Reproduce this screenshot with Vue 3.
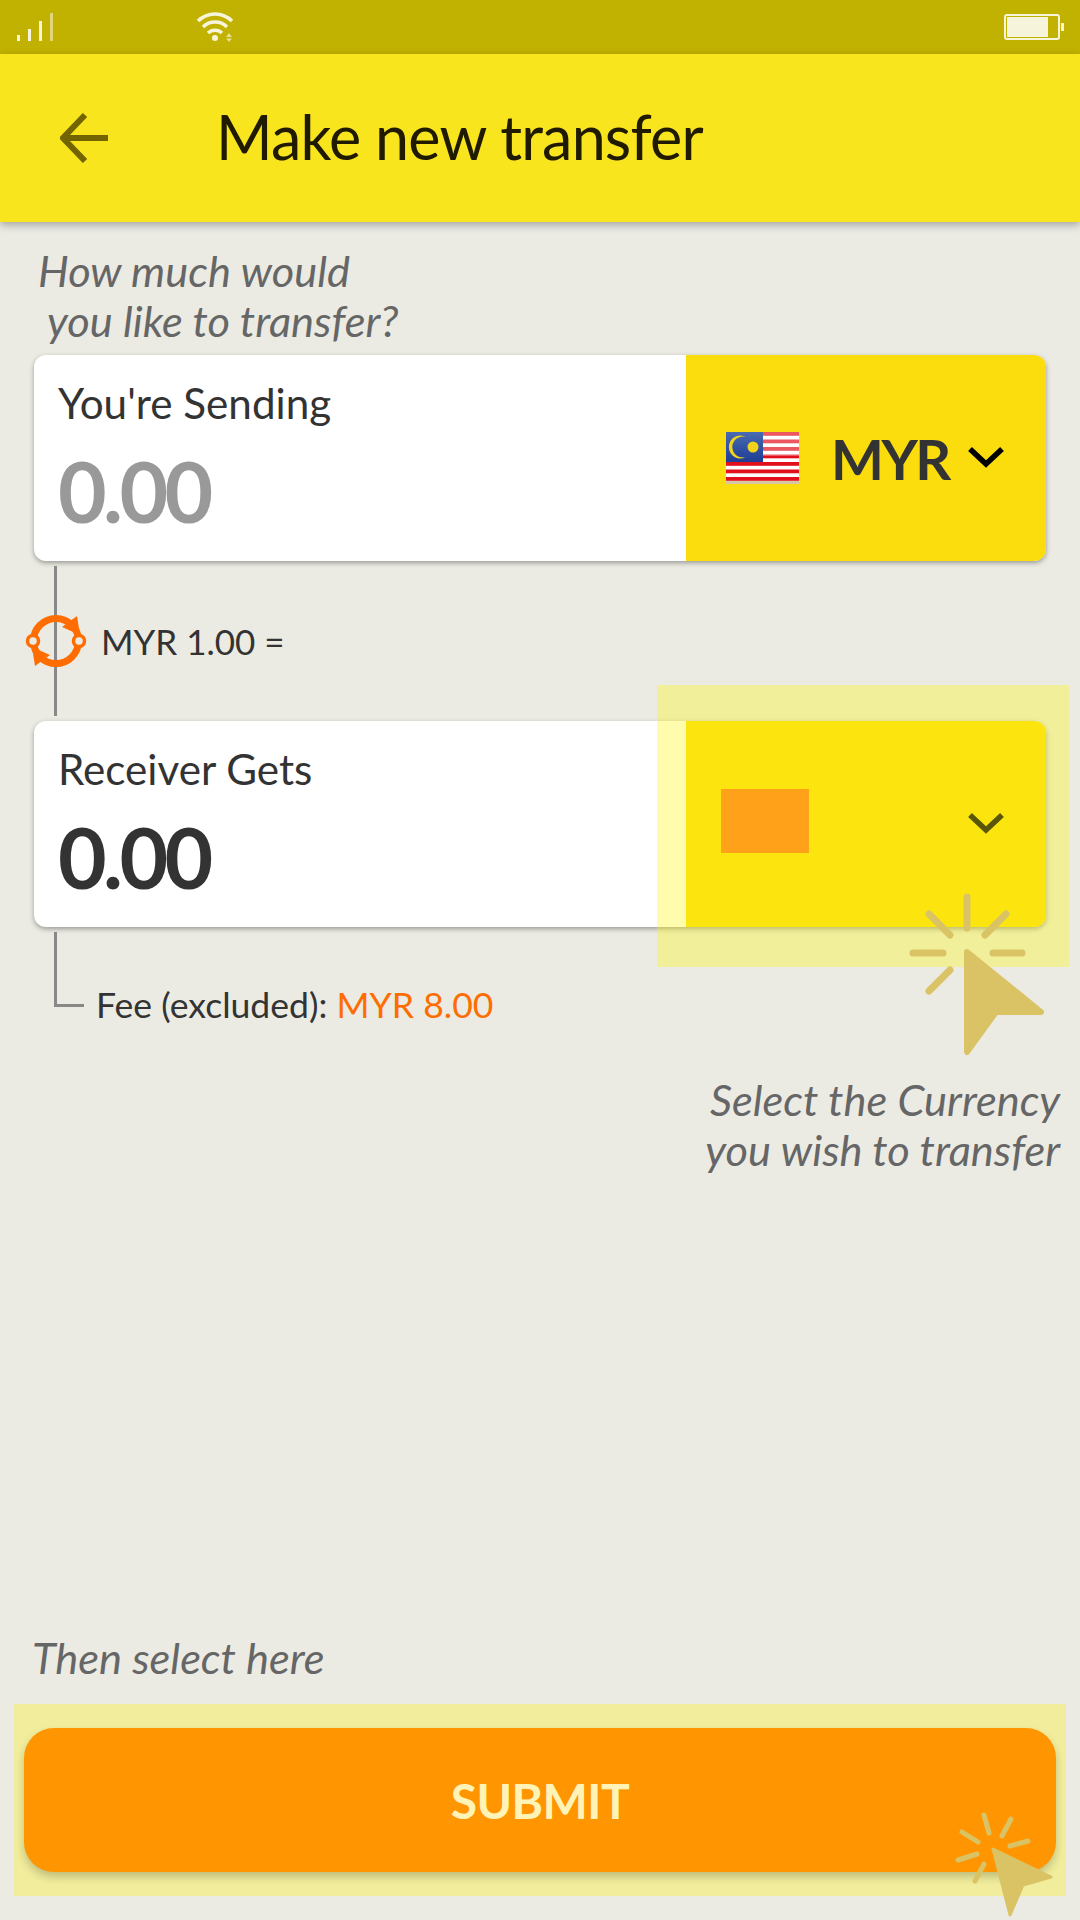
<script setup>
const signalBars = [
  { x: 17, h: 6, o: 1 },
  { x: 28, h: 12, o: 1 },
  { x: 39, h: 20, o: 1 },
  { x: 50, h: 28, o: 0.55 },
]
const stripes = [0, 1, 2, 3, 4, 5, 6]
const sparksTop = [
  [967, 897, 967, 928],
  [929, 914, 950, 935],
  [1006, 914, 985, 935],
  [913, 953, 943, 953],
  [993, 953, 1022, 953],
  [950, 970, 929, 991],
]
const sparksBottom = [
  [984, 1815, 989, 1833],
  [1011, 1819, 1002, 1836],
  [1028, 1841, 1010, 1846],
  [962, 1832, 978, 1842],
  [958, 1860, 977, 1854],
  [984, 1864, 975, 1881],
]
</script>

<template>
  <div class="app">
    <div class="status-bar">
      <svg class="status-left" width="300" height="54" viewBox="0 0 300 54">
        <rect v-for="b in signalBars" :key="b.x" :x="b.x" :y="41 - b.h" width="3" :height="b.h" fill="#f7f4dc" :opacity="b.o" />
        <g fill="none" stroke="#f7f4dc" stroke-width="3.5">
          <path d="M198 21 A24 24 0 0 1 232 21" />
          <path d="M203 27 A17 17 0 0 1 227 27" />
          <path d="M208 33 A10 10 0 0 1 222 33" />
        </g>
        <circle cx="215" cy="38" r="3" fill="#f7f4dc" />
        <path d="M229 33 L232 37 H226 Z M229 42 L232 38.500 H226 Z" fill="#f7f4dc" opacity="0.7" />
      </svg>
      <div class="battery"><div class="battery-fill"></div></div>
    </div>

    <header class="app-bar">
      <svg class="back" width="48" height="50" viewBox="0 0 48 50">
        <path d="M25 2 L3 25 L25 48 M3 25 H48" fill="none" stroke="#726500" stroke-width="6" />
      </svg>
      <h1>Make new transfer</h1>
    </header>

    <main class="content">
      <p class="hint prompt">How much would<br /><span class="indent">you like to transfer?</span></p>

      <section class="card">
        <div class="amount">
          <div class="label">You're Sending</div>
          <div class="value muted">0.00</div>
        </div>
        <div class="currency sending">
          <svg class="flag" width="73" height="52" viewBox="0 0 73 52">
            <defs>
              <linearGradient id="canton" x1="0" y1="0" x2="0" y2="1">
                <stop offset="0" stop-color="#4a6bb0" />
                <stop offset="1" stop-color="#1c3d94" />
              </linearGradient>
            </defs>
            <rect width="73" height="52" fill="#fff" />
            <rect v-for="i in stripes" :key="i" x="0" :y="i * 7.500" width="73" height="3.800" fill="#e2101c" />
            <rect x="37" width="36" height="24" fill="#fff" opacity="0.3" />
            <rect width="37" height="30" fill="url(#canton)" />
            <path d="M20 5 A11.500 11.500 0 1 0 20 25 A10.500 10.500 0 1 1 20 5 Z" fill="#f3d21c" />
            <circle cx="27" cy="15" r="5.500" fill="#f3d21c" />
            <rect y="49" width="73" height="3" fill="#d8c7a6" />
          </svg>
          <span class="code">MYR</span>
          <svg class="chevron" width="36" height="22" viewBox="0 0 36 22">
            <path d="M2 3 L18 18 L34 3" fill="none" stroke="#000" stroke-width="5.500" />
          </svg>
        </div>
      </section>

      <div class="rate">
        <svg class="rate-icon" width="62" height="56" viewBox="0 0 62 56">
          <circle cx="31" cy="28" r="22.500" fill="none" stroke="#ff6d00" stroke-width="7" />
          <path d="M52 3 L55 22 L37 14 Z M10 53 L7 34 L25 42 Z" fill="#ff6d00" />
          <circle cx="8" cy="28" r="5.500" fill="#ebebe4" stroke="#ff6d00" stroke-width="3.500" />
          <circle cx="54" cy="28" r="5.500" fill="#ebebe4" stroke="#ff6d00" stroke-width="3.500" />
        </svg>
        <span class="rate-text">MYR 1.00 =</span>
      </div>

      <section class="card">
        <div class="amount">
          <div class="label">Receiver Gets</div>
          <div class="value">0.00</div>
        </div>
        <div class="currency receiving">
          <div class="flag-empty"></div>
          <svg class="chevron" width="36" height="22" viewBox="0 0 36 22">
            <path d="M2 3 L18 18 L34 3" fill="none" stroke="#000" stroke-width="5.500" />
          </svg>
        </div>
      </section>

      <div class="fee">Fee (excluded): <span class="fee-amount">MYR 8.00</span></div>

      <p class="hint tip">Select the Currency<br />you wish to transfer</p>

      <div class="bottom">
        <p class="hint then">Then select here</p>
        <div class="submit-highlight">
          <button class="submit">SUBMIT</button>
        </div>
      </div>
    </main>

    <div class="currency-highlight"></div>

    <svg class="pointers" width="1080" height="1920" viewBox="0 0 1080 1920">
      <g stroke="#dac364" stroke-linecap="round" stroke-width="7">
        <line v-for="s in sparksTop" :key="s[0] + '-' + s[1]" :x1="s[0]" :y1="s[1]" :x2="s[2]" :y2="s[3]" />
      </g>
      <path d="M967 952 L1041 1012 H996 L967 1052 Z" fill="#dac364" stroke="#dac364" stroke-width="6" stroke-linejoin="round" />
      <g stroke="#dac364" stroke-linecap="round" stroke-width="5">
        <line v-for="s in sparksBottom" :key="s[0] + '-' + s[1]" :x1="s[0]" :y1="s[1]" :x2="s[2]" :y2="s[3]" />
      </g>
      <path d="M993 1849 L1051 1877 L1023 1885 L1010 1915 Z" fill="#dac364" stroke="#dac364" stroke-width="3" stroke-linejoin="round" />
    </svg>
  </div>
</template>

<style>
html, body { margin: 0; padding: 0; }
</style>

<style scoped>
.app {
  position: relative;
  width: 1080px;
  height: 1920px;
  overflow: hidden;
  display: flex;
  flex-direction: column;
  background: #ebebe4;
  font-family: Lato, "Liberation Sans", sans-serif;
  color: #333;
}

.status-bar {
  flex: none;
  height: 54px;
  background: #c1b100;
  display: flex;
  justify-content: space-between;
  align-items: flex-start;
  padding-right: 20px;
}
.status-left { display: block; }
.battery {
  position: relative;
  box-sizing: border-box;
  width: 56px;
  height: 26px;
  margin-top: 14px;
  border: 2px solid #f7f4dc;
  border-radius: 3px;
  padding: 1px;
}
.battery::after {
  content: "";
  position: absolute;
  right: -6px;
  top: 7px;
  width: 3px;
  height: 8px;
  background: #f7f4dc;
}
.battery-fill { width: 41px; height: 100%; background: #f7f4dc; }

.app-bar {
  flex: none;
  position: relative;
  z-index: 1;
  height: 168px;
  background: #f8e51e;
  box-shadow: 0 3px 8px rgba(0, 0, 0, 0.3);
  display: flex;
  align-items: center;
  padding-left: 60px;
}
.back { flex: none; margin-right: 108px; }
h1 {
  margin: 0 0 4px;
  font-size: 61px;
  font-weight: 400;
  letter-spacing: -0.8px;
  color: #1f1a00;
}

.content {
  flex: 1;
  display: flex;
  flex-direction: column;
  padding-top: 23px;
}

.hint {
  margin: 0;
  font-size: 43.400px;
  line-height: 50px;
  font-style: italic;
  color: #666;
}
.prompt { margin: 0 0 10px 38px; }
.indent { padding-left: 9px; }

.card {
  flex: none;
  display: flex;
  height: 206px;
  margin: 0 34px;
  border-radius: 12px;
  overflow: hidden;
  background: #fff;
  box-shadow: 0 2px 5px rgba(0, 0, 0, 0.35);
}
.amount {
  flex: 1;
  padding: 24px 0 0 24px;
}
.label { font-size: 42.200px; line-height: 48px; color: #333; }
.value {
  margin-top: 18px;
  font-size: 84px;
  line-height: 92px;
  font-weight: 700;
  letter-spacing: -3.600px;
  color: #333;
}
.value.muted { color: #999; }

.currency {
  flex: none;
  box-sizing: border-box;
  width: 360px;
  display: flex;
  align-items: center;
  padding-left: 40px;
}
.sending { background: #fbdc0c; }
.receiving { background: #fbdc0c; padding-left: 35px; }
.flag { flex: none; margin-right: 32px; }
.code { font-size: 56px; font-weight: 700; letter-spacing: -2.500px; color: #333; }
.chevron { flex: none; margin: 0 42px 3px auto; }
.flag-empty { width: 88px; height: 64px; margin-bottom: 6px; background: #ff761d; }

.rate {
  position: relative;
  flex: none;
  height: 160px;
  display: flex;
  align-items: center;
  padding-left: 25px;
}
.rate::before {
  content: "";
  position: absolute;
  left: 54px;
  top: 5px;
  width: 3px;
  height: 150px;
  background: #888;
}
.rate-icon { position: relative; flex: none; }
.rate-text { font-size: 35px; margin-left: 14px; }

.fee {
  position: relative;
  flex: none;
  padding: 56px 0 0 96px;
  font-size: 35.600px;
  line-height: 44px;
}
.fee::before {
  content: "";
  position: absolute;
  left: 54px;
  top: 5px;
  width: 27px;
  height: 72px;
  border-left: 3px solid #888;
  border-bottom: 3px solid #888;
}
.fee-amount { color: #ff6d00; }

.tip {
  margin-top: 47px;
  padding-right: 20px;
  text-align: right;
}

.bottom { margin-top: auto; }
.then { margin: 0 0 22px 32px; }
.submit-highlight {
  box-sizing: border-box;
  width: 1052px;
  margin: 0 0 24px 14px;
  padding: 24px 10px;
  background: #f1ed9c;
}
.submit {
  display: block;
  width: 100%;
  height: 144px;
  border: none;
  border-radius: 30px;
  background: #ff9500;
  box-shadow: 0 5px 8px rgba(0, 0, 0, 0.2);
  color: #fff3b8;
  font-family: inherit;
  font-size: 48px;
  font-weight: 700;
  letter-spacing: -0.600px;
}

.currency-highlight {
  position: absolute;
  left: 657px;
  top: 685px;
  width: 412px;
  height: 282px;
  background: rgba(255, 246, 20, 0.35);
}
.pointers {
  position: absolute;
  left: 0;
  top: 0;
  pointer-events: none;
}
</style>
